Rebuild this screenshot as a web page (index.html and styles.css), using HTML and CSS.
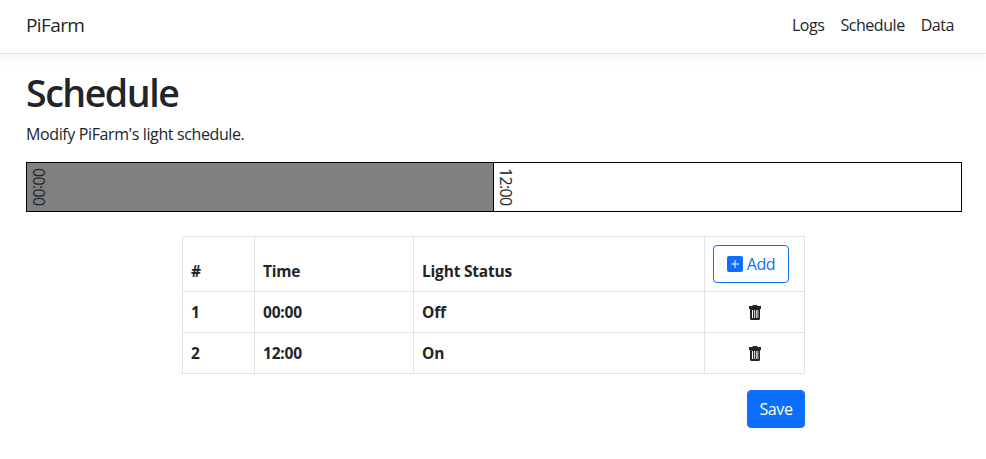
FILE: index.html
```html
<!DOCTYPE html>
<html lang="en">
<head>
<meta charset="utf-8">
<title>PiFarm</title>
<link rel="stylesheet" href="styles.css">
</head>
<body>
<header class="navbar">
  <a class="brand">PiFarm</a>
  <nav class="links"><a>Logs</a><a>Schedule</a><a>Data</a></nav>
</header>
<main class="container">
  <h1>Schedule</h1>
  <p class="lead">Modify PiFarm's light schedule.</p>
  <div class="timeline">
    <div class="slot off"><span>00:00</span></div>
    <div class="slot on"><span>12:00</span></div>
  </div>
  <div class="editor">
    <table>
      <colgroup><col class="c-num"><col class="c-time"><col class="c-status"><col class="c-action"></colgroup>
      <thead>
        <tr><th>#</th><th>Time</th><th>Light Status</th>
          <th><button class="btn outline"><svg width="16" height="16" viewBox="0 0 16 16" fill="currentColor"><path d="M2 0a2 2 0 0 0-2 2v12a2 2 0 0 0 2 2h12a2 2 0 0 0 2-2V2a2 2 0 0 0-2-2zm6.500 4.500v3h3a.5.5 0 0 1 0 1h-3v3a.5.5 0 0 1-1 0v-3h-3a.5.5 0 0 1 0-1h3v-3a.5.5 0 0 1 1 0"/></svg><span>Add</span></button></th></tr>
      </thead>
      <tbody>
        <tr><th>1</th><th>00:00</th><th>Off</th><th class="trash"><svg width="14" height="16" viewBox="0 0 14 16"><path fill="currentColor" fill-rule="evenodd" d="M5 0h4l.6 1H13v3h-1v9.500q0 1.500-1.500 1.500h-7Q2 15 2 13.500V4H1V1h3.400zM4 5v8h1V5zm2 0v8h.8V5zm1.900 0v8h.8V5zM9.500 5v8h.8V5z"/></svg></th></tr>
        <tr><th>2</th><th>12:00</th><th>On</th><th class="trash"><svg width="14" height="16" viewBox="0 0 14 16"><path fill="currentColor" fill-rule="evenodd" d="M5 0h4l.6 1H13v3h-1v9.500q0 1.500-1.500 1.500h-7Q2 15 2 13.500V4H1V1h3.400zM4 5v8h1V5zm2 0v8h.8V5zm1.900 0v8h.8V5zM9.500 5v8h.8V5z"/></svg></th></tr>
      </tbody>
    </table>
    <button class="btn save"><span>Save</span></button>
  </div>
</main>
</body>
</html>
```
FILE: styles.css
```css
* { box-sizing: border-box; }
body {
  margin: 0;
  background: #fff;
  color: #212529;
  font: 400 16px/24px "Open Sans", "Noto Sans", sans-serif;
  letter-spacing: -0.4px;
}
.navbar {
  display: flex;
  align-items: center;
  justify-content: space-between;
  height: 54px;
  padding: 0 32px 3px 26px;
  border-bottom: 1px solid #dee2e6;
  box-shadow: 0 4px 12px rgba(0, 0, 0, .05);
}
.brand { font-size: 19px; letter-spacing: -0.6px; }
.links { display: flex; gap: 16px; letter-spacing: -0.45px; }
.container { padding: 15px 24px 0 26px; }
h1 {
  margin: 0 0 7px;
  font-size: 37.5px;
  font-weight: 600;
  line-height: 48px;
  letter-spacing: -1.45px;
}
.lead { margin: 0 0 18px; line-height: 20px; letter-spacing: -0.38px; }
.timeline {
  display: flex;
  height: 50px;
  border: 1px solid #000;
}
.slot { flex: 1; padding: 5px 0 0; }
.slot.off { flex: 0 0 466px; background: gray; }
.slot.on { border-left: 1px solid #000; }
.slot span { display: block; width: 24px; writing-mode: vertical-rl; letter-spacing: -0.65px; }
.editor {
  display: flex;
  flex-direction: column;
  align-items: flex-end;
  width: 623px;
  margin: 24px 0 0 156px;
}
table {
  width: 623px;
  table-layout: fixed;
  border-collapse: collapse;
}
.c-num { width: 72px; }
.c-time { width: 159px; }
.c-status { width: 291px; }
.c-action { width: 100px; }
th {
  height: 41px;
  padding: 8px;
  border: 1px solid #dee2e6;
  text-align: left;
  vertical-align: bottom;
  font-weight: 700;
  font-size: 15.5px;
  letter-spacing: -0.2px;
}
thead th { height: 55px; }
th.trash { padding: 7px 8px 9px; text-align: center; }
th svg { display: inline-block; vertical-align: middle; }
.btn {
  display: flex;
  align-items: center;
  justify-content: center;
  height: 38px;
  padding: 0 12px;
  border: 1px solid #0d6efd;
  border-radius: 4px;
  font: inherit;
  font-size: 16px;
  font-weight: 400;
  letter-spacing: -0.4px;
}
.outline { width: 76px; gap: 4px; background: #fff; color: #0d6efd; }
.save { width: 58px; margin-top: 16px; background: #0d6efd; color: #fff; }
```
